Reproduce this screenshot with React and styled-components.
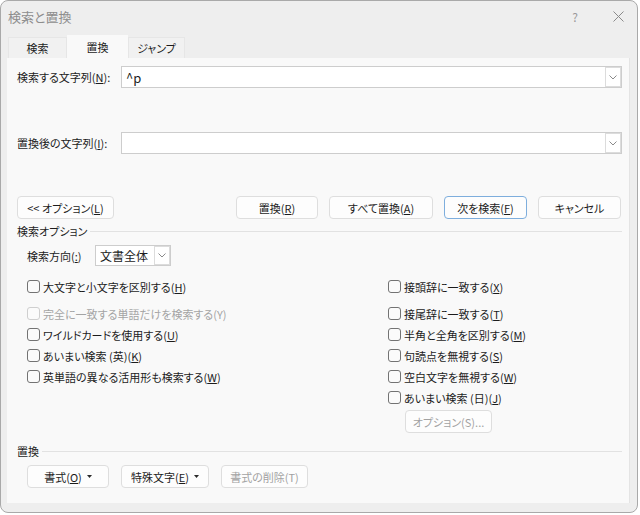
import React from "react";
import styled, { createGlobalStyle } from "styled-components";

const GlobalStyle = createGlobalStyle`
  html, body {
    margin: 0;
    padding: 0;
    background: #ffffff;
  }
  body {
    font-family: "Noto Sans CJK JP", sans-serif;
    font-size: 11px;
    color: #1c1c1c;
    font-feature-settings: "palt";
  }
`;

const Window = styled.div`
  width: 638px;
  height: 513px;
  box-sizing: border-box;
  border: 1px solid #a9a9a9;
  border-radius: 8px;
  background: #eeeeee;
  display: flex;
  flex-direction: column;
  overflow: hidden;
`;

const TitleBar = styled.div`
  height: 35px;
  display: flex;
  align-items: center;
  padding-left: 7px;
  padding-bottom: 4px;
  box-sizing: border-box;
`;

const Title = styled.div`
  flex: 1;
  font-size: 13px;
  color: #8d8d8d;
`;

const TitleButton = styled.div`
  width: ${({ $w }) => $w}px;
  display: flex;
  justify-content: center;
  align-items: center;
  color: #9a9a9a;
  font-size: 12px;
`;

const TabRow = styled.div`
  height: 22px;
  display: flex;
  align-items: flex-end;
  padding-left: 7px;
`;

const Tab = styled.div`
  width: ${({ $w }) => $w}px;
  height: ${({ $active }) => ($active ? 23 : 21)}px;
  box-sizing: border-box;
  display: flex;
  align-items: center;
  justify-content: center;
  background: ${({ $active }) => ($active ? "#f9f9f9" : "#f1f1f1")};
  border: 1px solid ${({ $active }) => ($active ? "#f9f9f9" : "#e6e6e6")};
  border-bottom: none;
  color: #1c1c1c;
`;

const Panel = styled.div`
  margin: 0 7px 0 6px;
  height: 445px;
  box-sizing: border-box;
  background: #f9f9f9;
  border-right: 1px solid #e4e4e4;
  padding: 8px 7px 0 10px;
  display: flex;
  flex-direction: column;
`;

const FieldRow = styled.div`
  display: flex;
  align-items: center;
  margin-top: ${({ $mt }) => $mt || 0}px;
`;

const FieldLabel = styled.div`
  width: 104px;
`;

const Combo = styled.div`
  flex: 1;
  height: 22px;
  box-sizing: border-box;
  background: #ffffff;
  border: 1px solid #cdcdcd;
  display: flex;
  align-items: stretch;
`;

const ComboText = styled.div`
  flex: 1;
  padding-left: 4px;
  display: flex;
  align-items: center;
  font-size: ${({ $size }) => $size || 13}px;
`;

const ComboArrow = styled.div`
  width: 16px;
  box-sizing: border-box;
  border: 1px solid #dcdcdc;
  display: flex;
  align-items: center;
  justify-content: center;
  background: #ffffff;
`;

const ButtonRow = styled.div`
  display: flex;
  align-items: center;
  gap: ${({ $gap }) => $gap || 11}px;
  margin-top: ${({ $mt }) => $mt || 0}px;
  padding-left: ${({ $pl }) => $pl || 0}px;
  padding-right: ${({ $pr }) => $pr || 0}px;
`;

const Spacer = styled.div`
  flex: 1;
`;

const Button = styled.div`
  width: ${({ $w }) => $w}px;
  height: 23px;
  box-sizing: border-box;
  display: flex;
  align-items: center;
  justify-content: center;
  gap: 5px;
  background: #fdfdfd;
  border: 1px solid ${({ $focus }) => ($focus ? "#7eaedd" : "#dedede")};
  border-radius: 4px;
  color: ${({ $disabled }) => ($disabled ? "#a2a2a2" : "#1c1c1c")};
  margin-left: ${({ $ml }) => $ml || 0}px;
  margin-top: ${({ $mt }) => $mt || 0}px;
`;

const GroupHeader = styled.div`
  display: flex;
  align-items: center;
  height: 16px;
  margin-top: ${({ $mt }) => $mt}px;

  &::after {
    content: "";
    flex: 1;
    height: 1px;
    margin-left: 3px;
    background: #e2e2e2;
  }
`;

const Options = styled.div`
  display: flex;
  padding-left: 10px;
  margin-top: 6px;
`;

const Column = styled.div`
  width: ${({ $w }) => ($w ? `${$w}px` : "auto")};
  flex: ${({ $w }) => ($w ? "none" : 1)};
  display: flex;
  flex-direction: column;
`;

const DirectionRow = styled.div`
  height: 21px;
  display: flex;
  align-items: center;
`;

const DirLabel = styled.div`
  width: 68px;
`;

const Select = styled.div`
  width: 76px;
  height: 21px;
  box-sizing: border-box;
  background: #ffffff;
  border: 1px solid #cdcdcd;
  display: flex;
  align-items: stretch;
`;

const Check = styled.div`
  height: 21px;
  display: flex;
  align-items: center;
  gap: 3px;
  margin-top: ${({ $mt }) => $mt || 0}px;
  color: ${({ $disabled }) => ($disabled ? "#a4a4a4" : "#1c1c1c")};
`;

const Box = styled.span`
  width: 13px;
  height: 13px;
  box-sizing: border-box;
  border: 1px solid ${({ $disabled }) => ($disabled ? "#cfcfcf" : "#737373")};
  border-radius: 3px;
  background: #fbfbfb;
`;

const Chevron = () => (
  <svg width="8" height="5" viewBox="0 0 8 5">
    <path d="M0.5 0.5 L4 4 L7.5 0.5" fill="none" stroke="#8a8a8a" strokeWidth="1" />
  </svg>
);

const Caret = () => (
  <svg width="5" height="3" viewBox="0 0 5 3">
    <path d="M0 0 H5 L2.5 3 Z" fill="#2a2a2a" />
  </svg>
);

const CloseIcon = () => (
  <svg width="11" height="11" viewBox="0 0 11 11">
    <path d="M0.5 0.5 L10.5 10.5 M10.5 0.5 L0.5 10.5" stroke="#8a8a8a" strokeWidth="1" />
  </svg>
);

const leftChecks = [
  { label: <>大文字と小文字を区別する(<u>H</u>)</>, mt: 10 },
  { label: <>完全に一致する単語だけを検索する(Y)</>, mt: 6, disabled: true },
  { label: <>ワイルドカードを使用する(<u>U</u>)</> },
  { label: <>あいまい検索 (英)(<u>K</u>)</> },
  { label: <>英単語の異なる活用形も検索する(<u>W</u>)</> },
];

const rightChecks = [
  { label: <>接頭辞に一致する(<u>X</u>)</>, mt: 10 },
  { label: <>接尾辞に一致する(<u>T</u>)</>, mt: 6 },
  { label: <>半角と全角を区別する(<u>M</u>)</> },
  { label: <>句読点を無視する(<u>S</u>)</> },
  { label: <>空白文字を無視する(<u>W</u>)</> },
  { label: <>あいまい検索 (日)(<u>J</u>)</> },
];

const CheckItem = ({ item }) => (
  <Check $mt={item.mt} $disabled={item.disabled}>
    <Box $disabled={item.disabled} />
    <span>{item.label}</span>
  </Check>
);

const App = () => {
  return (
    <>
      <GlobalStyle />
      <Window>
        <TitleBar>
          <Title>検索と置換</Title>
          <TitleButton $w={48}>?</TitleButton>
          <TitleButton $w={38}>
            <CloseIcon />
          </TitleButton>
        </TitleBar>

        <TabRow>
          <Tab $w={59}>検索</Tab>
          <Tab $w={61} $active>
            置換
          </Tab>
          <Tab $w={57}>ジャンプ</Tab>
        </TabRow>

        <Panel>
          <FieldRow>
            <FieldLabel>
              検索する文字列(<u>N</u>):
            </FieldLabel>
            <Combo>
              <ComboText>^p</ComboText>
              <ComboArrow>
                <Chevron />
              </ComboArrow>
            </Combo>
          </FieldRow>

          <FieldRow $mt={44}>
            <FieldLabel>
              置換後の文字列(<u>I</u>):
            </FieldLabel>
            <Combo>
              <ComboText />
              <ComboArrow>
                <Chevron />
              </ComboArrow>
            </Combo>
          </FieldRow>

          <ButtonRow $mt={42} $pr={1}>
            <Button $w={97}>
              <span>
                &lt;&lt; オプション(<u>L</u>)
              </span>
            </Button>
            <Spacer />
            <Button $w={82}>
              <span>
                置換(<u>R</u>)
              </span>
            </Button>
            <Button $w={104}>
              <span>
                すべて置換(<u>A</u>)
              </span>
            </Button>
            <Button $w={83} $focus>
              <span>
                次を検索(<u>F</u>)
              </span>
            </Button>
            <Button $w={83}>キャンセル</Button>
          </ButtonRow>

          <GroupHeader $mt={4}>検索オプション</GroupHeader>

          <Options>
            <Column $w={361}>
              <DirectionRow>
                <DirLabel>
                  検索方向(<u>:</u>)
                </DirLabel>
                <Select>
                  <ComboText $size={12}>文書全体</ComboText>
                  <ComboArrow>
                    <Chevron />
                  </ComboArrow>
                </Select>
              </DirectionRow>
              {leftChecks.map((item, i) => (
                <CheckItem key={i} item={item} />
              ))}
            </Column>
            <Column>
              <DirectionRow />
              {rightChecks.map((item, i) => (
                <CheckItem key={i} item={item} />
              ))}
              <Button $w={87} $ml={17} $mt={2} $disabled>
                オプション(S)...
              </Button>
            </Column>
          </Options>

          <GroupHeader $mt={10}>置換</GroupHeader>

          <ButtonRow $mt={6} $pl={10} $gap={12}>
            <Button $w={82}>
              <span>
                書式(<u>O</u>)
              </span>
              <Caret />
            </Button>
            <Button $w={88}>
              <span>
                特殊文字(<u>E</u>)
              </span>
              <Caret />
            </Button>
            <Button $w={87} $disabled>
              書式の削除(T)
            </Button>
          </ButtonRow>
        </Panel>
      </Window>
    </>
  );
};

export default App;
